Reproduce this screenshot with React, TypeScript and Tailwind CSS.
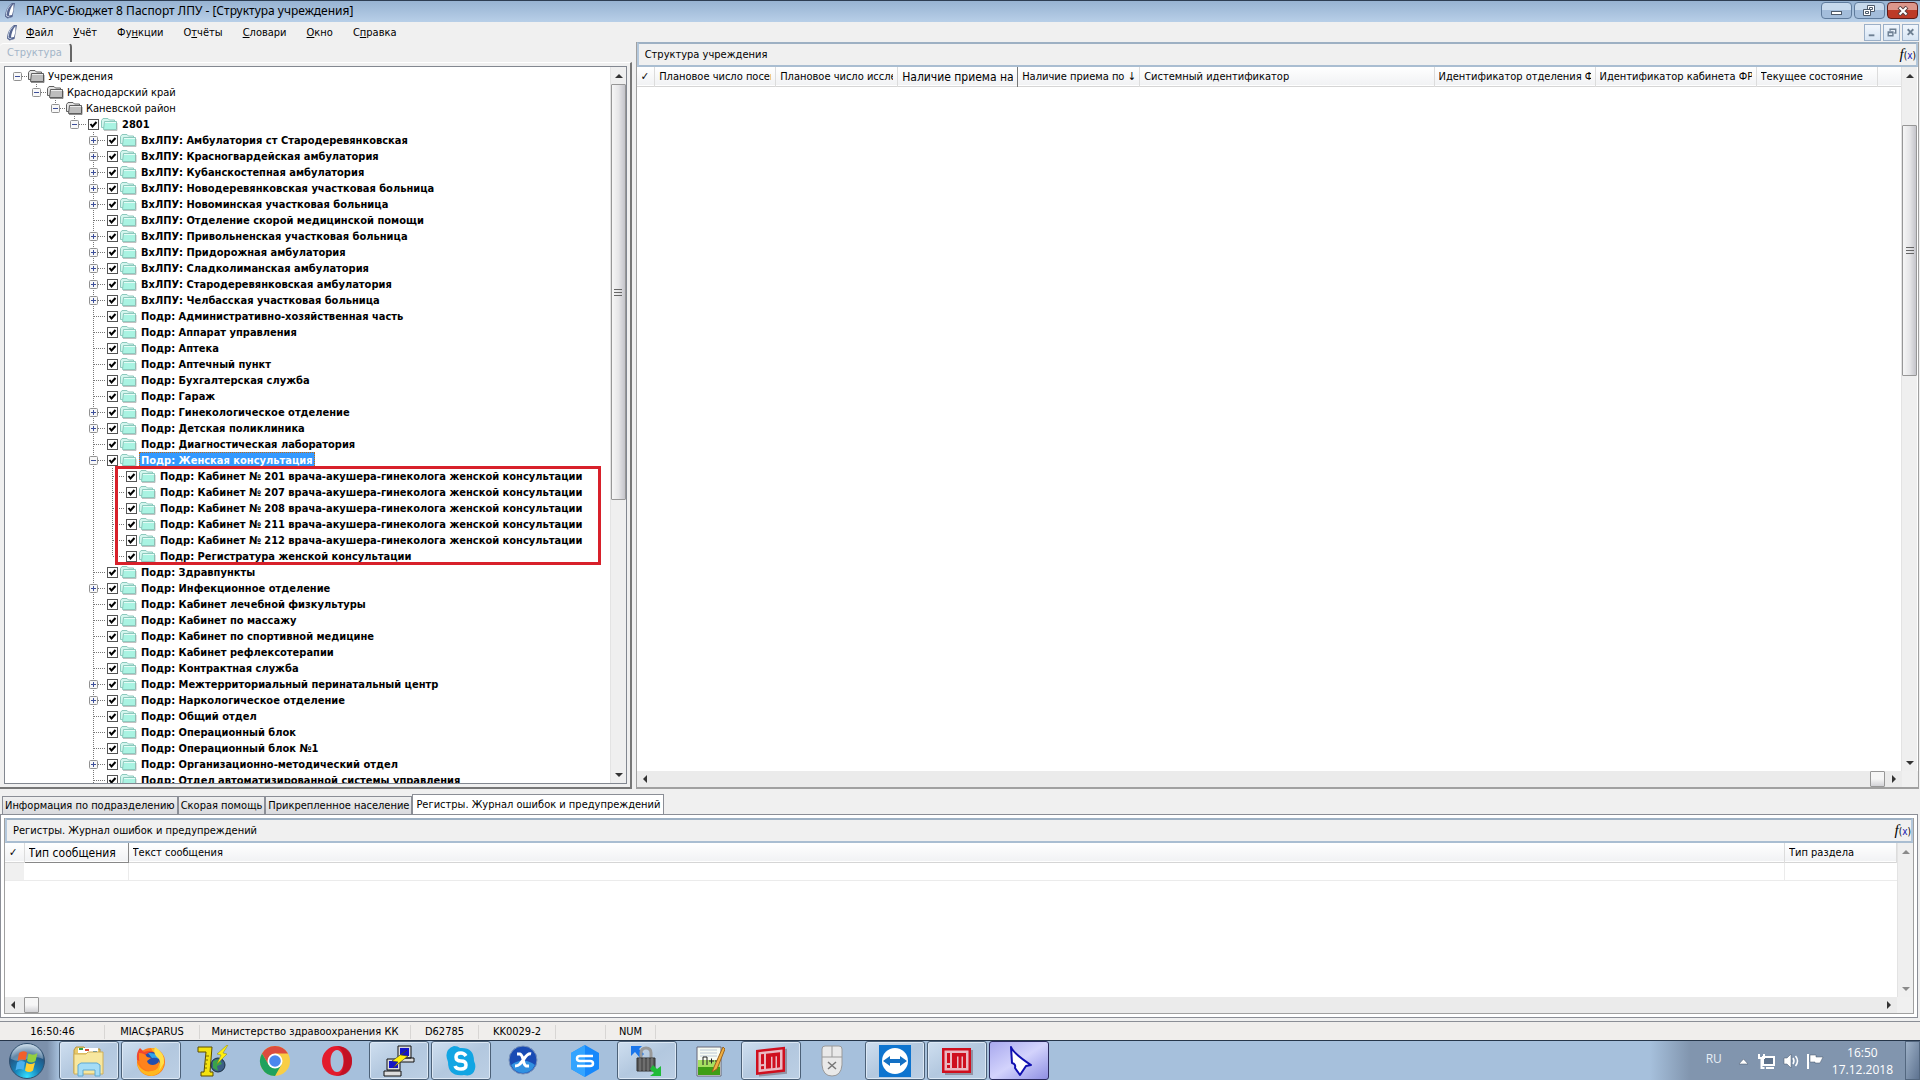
import type { ReactNode } from 'react';

type Item = { text: string; level: number; kind?: 'plus' | 'minus'; gray?: boolean; selected?: boolean };

const roots: Item[] = [
  { text: 'Учреждения', level: 0, kind: 'minus', gray: true },
  { text: 'Краснодарский край', level: 1, kind: 'minus', gray: true },
  { text: 'Каневской район', level: 2, kind: 'minus', gray: true },
  { text: '2801', level: 3, kind: 'minus' },
];

const unitsBefore: Item[] = [
  { text: 'ВхЛПУ: Амбулатория ст Стародеревянковская', level: 4, kind: 'plus' },
  { text: 'ВхЛПУ: Красногвардейская амбулатория', level: 4, kind: 'plus' },
  { text: 'ВхЛПУ: Кубанскостепная амбулатория', level: 4, kind: 'plus' },
  { text: 'ВхЛПУ: Новодеревянковская участковая больница', level: 4, kind: 'plus' },
  { text: 'ВхЛПУ: Новоминская участковая больница', level: 4, kind: 'plus' },
  { text: 'ВхЛПУ: Отделение скорой медицинской помощи', level: 4 },
  { text: 'ВхЛПУ: Привольненская участковая больница', level: 4, kind: 'plus' },
  { text: 'ВхЛПУ: Придорожная амбулатория', level: 4, kind: 'plus' },
  { text: 'ВхЛПУ: Сладколиманская амбулатория', level: 4, kind: 'plus' },
  { text: 'ВхЛПУ: Стародеревянковская амбулатория', level: 4, kind: 'plus' },
  { text: 'ВхЛПУ: Челбасская участковая больница', level: 4, kind: 'plus' },
  { text: 'Подр: Административно-хозяйственная часть', level: 4 },
  { text: 'Подр: Аппарат управления', level: 4 },
  { text: 'Подр: Аптека', level: 4 },
  { text: 'Подр: Аптечный пункт', level: 4 },
  { text: 'Подр: Бухгалтерская служба', level: 4 },
  { text: 'Подр: Гараж', level: 4 },
  { text: 'Подр: Гинекологическое отделение', level: 4, kind: 'plus' },
  { text: 'Подр: Детская поликлиника', level: 4, kind: 'plus' },
  { text: 'Подр: Диагностическая лаборатория', level: 4 },
  { text: 'Подр: Женская консультация', level: 4, kind: 'minus', selected: true },
];

const rooms: Item[] = [
  { text: 'Подр: Кабинет № 201 врача-акушера-гинеколога женской консультации', level: 5 },
  { text: 'Подр: Кабинет № 207 врача-акушера-гинеколога женской консультации', level: 5 },
  { text: 'Подр: Кабинет № 208 врача-акушера-гинеколога женской консультации', level: 5 },
  { text: 'Подр: Кабинет № 211 врача-акушера-гинеколога женской консультации', level: 5 },
  { text: 'Подр: Кабинет № 212 врача-акушера-гинеколога женской консультации', level: 5 },
  { text: 'Подр: Регистратура женской консультации', level: 5 },
];

const unitsAfter: Item[] = [
  { text: 'Подр: Здравпункты', level: 4 },
  { text: 'Подр: Инфекционное отделение', level: 4, kind: 'plus' },
  { text: 'Подр: Кабинет лечебной физкультуры', level: 4 },
  { text: 'Подр: Кабинет по массажу', level: 4 },
  { text: 'Подр: Кабинет по спортивной медицине', level: 4 },
  { text: 'Подр: Кабинет рефлексотерапии', level: 4 },
  { text: 'Подр: Контрактная служба', level: 4 },
  { text: 'Подр: Межтерриториальный перинатальный центр', level: 4, kind: 'plus' },
  { text: 'Подр: Наркологическое отделение', level: 4, kind: 'plus' },
  { text: 'Подр: Общий отдел', level: 4 },
  { text: 'Подр: Операционный блок', level: 4 },
  { text: 'Подр: Операционный блок №1', level: 4 },
  { text: 'Подр: Организационно-методический отдел', level: 4, kind: 'plus' },
  { text: 'Подр: Отдел автоматизированной системы управления', level: 4 },
];

const menu = [
  ['', 'Ф', 'айл'],
  ['', 'У', 'чёт'],
  ['Фу', 'н', 'кции'],
  ['О', 'т', 'чёты'],
  ['', 'С', 'ловари'],
  ['', 'О', 'кно'],
  ['С', 'п', 'равка'],
];

function SailIcon() {
  return (
    <svg width="13" height="17" viewBox="0 0 13 17" className="shrink-0">
      <path d="M8 1C4 4 1 9 1 14.500L3.500 16.500l5-1.500L11 1z" fill="#56658f" />
      <path d="M9.500 2C7 5 5 10 5 13.500L8 13q2-5 1.500-11z" fill="#fff" />
      <path d="M7 2.500C3.500 6 2 10 2.500 14l3 1" stroke="#c3cfe4" fill="none" />
    </svg>
  );
}

function Folder({ gray }: { gray?: boolean }) {
  const line = gray ? '#5f5f5f' : '#8cc9bd';
  const back = gray ? '#e4e4e4' : '#d4f6ee';
  const front = gray ? '#bdbdbd' : '#a9f3e2';
  return (
    <svg width="17" height="14" viewBox="0 0 17 14" className="shrink-0">
      <path d="M.5 10.500V3.500l1.500-2h5l1.500 1.500h5V11z" fill={back} stroke={line} />
      <path d="M2.500 12.500l1-8h12v8z" fill={front} stroke={line} />
      <path d="M4 5.500h11" stroke="#fff" strokeOpacity=".7" />
      <path d="M3 13.500h13V6" stroke={gray ? '#444' : '#9a9a9a'} strokeOpacity=".6" fill="none" />
    </svg>
  );
}

function Guide({ full, own, kind }: { full: boolean; own: boolean; kind?: 'plus' | 'minus' }) {
  return (
    <svg width="19" height="16" viewBox="0 0 19 16" className="shrink-0 overflow-visible">
      {full && <path d="M9.500 0v16" stroke="#777" strokeDasharray="1 1" />}
      {own && !full && <path d="M9.500 0v8" stroke="#777" strokeDasharray="1 1" />}
      {(own || kind) && <path d="M10 8.500h11" stroke="#777" strokeDasharray="1 1" />}
      {kind && (
        <>
          <rect x="5.500" y="4.500" width="8" height="8" rx="1" fill="#f8f8f8" stroke="#919191" />
          <path d={kind === 'plus' ? 'M7 8.500h5M9.500 6v5' : 'M7 8.500h5'} stroke="#3d4f9a" />
        </>
      )}
    </svg>
  );
}

function Row({ item, last }: { item: Item; last?: boolean }) {
  const id = 'node-' + item.text.replace(/[^\p{L}\d]+/gu, '-');
  const cells = Array.from({ length: item.level + 1 }, (_, i) => i);
  return (
    <li className="flex h-4 items-center whitespace-nowrap">
      {cells.map((i) => (
        <Guide
          key={i}
          full={(i === 4 && item.level >= 4) || (i === 5 && !last)}
          own={i === item.level && i > 0}
          kind={i === item.level ? item.kind : undefined}
        />
      ))}
      {item.gray ? (
        <>
          <span className="ml-px flex"><Folder gray /></span>
          <span className="mt-[2px] ml-[3px]">{item.text}</span>
        </>
      ) : (
        <>
          <span className="relative ml-1 flex size-[11px] shrink-0">
            <input id={id} type="checkbox" defaultChecked className="peer size-[11px] appearance-none border border-[#555] bg-white" />
            <svg viewBox="0 0 11 11" className="pointer-events-none absolute inset-0 hidden peer-checked:block">
              <path d="M2.500 5l2 2.500L8.500 3" fill="none" stroke="#000" strokeWidth="2" />
            </svg>
          </span>
          <span className="ml-[2px] flex"><Folder /></span>
          <label
            htmlFor={id}
            className={
              item.selected
                ? 'ml-[2px] border border-dotted border-[#c46a10] bg-[#3399ff] px-px pt-px leading-[13px] font-bold text-white'
                : 'mt-[2px] ml-1 font-bold'
            }
          >
            {item.text}
          </label>
        </>
      )}
    </li>
  );
}

function Arrow({ dir, faint }: { dir: 'up' | 'down' | 'left' | 'right'; faint?: boolean }) {
  const paths = { up: 'M4 11l4-4 4 4z', down: 'M4 6l4 4 4-4z', left: 'M10 4L6 8l4 4z', right: 'M6 4l4 4-4 4z' };
  return (
    <button aria-label={dir} className="size-4 shrink-0">
      <svg viewBox="0 0 16 16" className="size-4">
        <path d={paths[dir]} fill={faint ? '#8a8a8a' : '#333'} />
      </svg>
    </button>
  );
}

type BarProps = { before: number; thumb: number; after: number; faint?: boolean };

function VScroll({ before, thumb, after, faint }: BarProps) {
  return (
    <div className="flex w-4 shrink-0 flex-col border-l border-[#e3e3e3] bg-[#efefef]">
      <Arrow dir="up" faint={faint} />
      <div className="flex flex-1 flex-col">
        <div style={{ flexGrow: before }} />
        {thumb > 0 && (
          <div
            className="flex basis-0 items-center justify-center rounded-[1px] border border-[#979797] bg-linear-to-r from-[#f6f6f6] via-[#e6e6e8] to-[#c4c4ca]"
            style={{ flexGrow: thumb }}
          >
            <span className="h-[7px] w-2 border-y border-[#666]">
              <span className="mt-[2px] block h-px bg-[#666]" />
            </span>
          </div>
        )}
        <div style={{ flexGrow: after }} />
      </div>
      <Arrow dir="down" faint={faint} />
    </div>
  );
}

function HScroll({ before, after }: { before: number; after: number }) {
  return (
    <div className="flex h-4 shrink-0 bg-[#ebebeb]">
      <Arrow dir="left" />
      <div className="flex flex-1">
        <div style={{ flexGrow: before }} />
        <div className="w-[15px] rounded-[1px] border border-[#979797] bg-linear-to-b from-[#f6f6f6] from-50% to-[#d2d2d6]" />
        <div style={{ flexGrow: after }} />
      </div>
      <Arrow dir="right" />
      <div className="w-4 bg-[#f0f0f0]" />
    </div>
  );
}

function PanelTitle({ children }: { children: ReactNode }) {
  return (
    <div className="flex h-[25px] shrink-0 items-center justify-between border-2 border-[#b4c8dc] border-t-[#9db0c3] border-b-[#a9bdd1] bg-[#f0f0f0] pt-px pl-[6px]">
      <h2>{children}</h2>
      <button aria-label="Формула" className="leading-4">
        <i className="font-['Liberation_Serif',serif] text-[15px]">f</i>
        <span className="text-[10px]">(<span className="text-[#1b1bb0]">x</span>)</span>
      </button>
    </div>
  );
}

function Head({ children, className = '' }: { children?: ReactNode; className?: string }) {
  return (
    <th className={`border-r border-[#dcdcdc] pt-[2px] pr-1 pl-1 text-left font-normal ${className}`}>
      <div className="overflow-hidden whitespace-nowrap">{children}</div>
    </th>
  );
}

function TaskButton({ label, open, active, children }: { label: string; open?: boolean; active?: boolean; children: ReactNode }) {
  const look = active
    ? 'border-[#2a2a5e] bg-linear-to-br from-[#a9a9ee] via-[#d3d3fc] to-[#8f8fe2]'
    : open
      ? 'border-[#4c6178] bg-linear-to-br from-[#cfdff0] via-[#b3c8df] to-[#bccfe4] shadow-[inset_0_0_0_1px_#dce8f5]'
      : 'border-transparent';
  return (
    <button aria-label={label} className={`flex h-[39px] w-[60px] items-center justify-center rounded-[3px] border ${look}`}>
      <svg width="32" height="32" viewBox="0 0 32 32">{children}</svg>
    </button>
  );
}

function Monogram() {
  return (
    <>
      <path d="M4 5h28v25H4z" fill="#6b5a66" opacity=".5" />
      <path d="M1 3h29v25H1z" fill="#cf0f1e" />
      <path d="M3.500 5.500h24v20h-24z" fill="#e9b9c2" />
      <path d="M6 8h3v10H6zM6 20h3v3H6z" fill="#cf0f1e" />
      <path d="M11 8h14v15h-3V11.500h-1.500V23h-3V11.500H16V23h-5z" fill="#cf0f1e" />
    </>
  );
}

const cell = 'border-r border-[#d8d6d4]';

export default function App() {
  return (
    <div className="flex h-screen flex-col overflow-hidden bg-[#f0f0f0] font-['DejaVu_Sans_Condensed','DejaVu_Sans',sans-serif] text-[11px] leading-[14px] text-black">
      {/* Title bar */}
      <header className="flex h-[22px] shrink-0 items-start border-t border-[#2d3d52] bg-linear-to-b from-[#97b3d2] to-[#b8cfe8] pl-1">
        <span className="mt-px"><SailIcon /></span>
        <h1 className="mt-[2px] ml-[9px] font-['Noto_Sans',sans-serif] text-[12px] leading-4">ПАРУС-Бюджет 8 Паспорт ЛПУ - [Структура учреждения]</h1>
        <div className="mt-px mr-[2px] ml-auto flex gap-[2px]">
          <button aria-label="Свернуть" className="flex h-[17px] w-[31px] items-center justify-center rounded-sm border border-[#5f7b9c] bg-linear-to-b from-[#c7d9ec] from-50% to-[#a3bddb] to-50%">
            <span className="mt-1 h-1 w-[11px] border border-[#4d5a6b] bg-white" />
          </button>
          <button aria-label="Развернуть" className="flex h-[17px] w-[31px] items-center justify-center rounded-sm border border-[#5f7b9c] bg-linear-to-b from-[#c7d9ec] from-50% to-[#a3bddb] to-50%">
            <svg width="13" height="12" viewBox="0 0 13 12" fill="#fff" stroke="#4d5a6b">
              <path d="M4.500.500h7v6h-7z" />
              <path d="M6.500 2.500h3v2h-3z" />
              <path d="M.5 4.500h7v6h-7z" />
              <path d="M2.500 6.500h3v2h-3z" />
            </svg>
          </button>
          <button aria-label="Закрыть" className="flex h-[17px] w-[31px] items-center justify-center rounded-sm border border-[#5c1a16] bg-linear-to-b from-[#dc968b] from-50% to-[#bd3a27] to-50%">
            <svg width="12" height="10" viewBox="0 0 12 10">
              <path d="M2 1l8 8M10 1L2 9" stroke="#5b4040" strokeWidth="4" />
              <path d="M2.500 1.500l7 7M9.500 1.500l-7 7" stroke="#fff" strokeWidth="2" />
            </svg>
          </button>
        </div>
      </header>

      {/* Menu */}
      <nav className="flex h-5 shrink-0 items-center bg-[#f0f0f0] pr-px pl-[6px]">
        <SailIcon />
        <div className="mt-[2px] ml-[7px] flex gap-5">
          {menu.map(([a, u, b]) => (
            <button key={a + u + b}>{a}<span className="underline">{u}</span>{b}</button>
          ))}
        </div>
        <div className="ml-auto flex gap-[2px]">
          {['M4 11h6', 'M6.500 6V4.500h6v4H11M4.500 7.500h5v4h-5zM4.500 8h5', 'M5 4.500l6 6M11 4.500l-6 6'].map((d, i) => (
            <button key={d} aria-label={['Свернуть окно', 'Восстановить окно', 'Закрыть окно'][i]} className="h-[17px] w-[17px] border border-[#9cb0c8] bg-linear-to-b from-[#f1f6fc] to-[#d7e5f4]">
              <svg width="15" height="15" viewBox="0 0 16 16">
                <path d={d} fill="none" stroke="#6d7f92" strokeWidth={i === 1 ? 1.5 : 2} />
              </svg>
            </button>
          ))}
        </div>
      </nav>

      <main className="flex min-h-0 flex-1">
        {/* Structure tree */}
        <section className="flex w-[32.9%] shrink-0 flex-col">
          <div className="flex h-5 items-center">
            <button role="tab" className="mt-px h-[19px] rounded-t-sm border-t border-r-2 border-t-white border-r-[#666] pr-2 pl-[7px] text-[#a3b5c8]">Структура</button>
          </div>
          <div className="flex min-h-0 flex-1 border-t border-r-2 border-b-2 border-white border-r-[#777] border-b-[#777] p-[3px] pl-1">
            <div className="flex min-h-0 min-w-0 flex-1 border border-[#828790] bg-white">
              <ul className="min-w-0 flex-1 overflow-hidden pt-px pl-[3px]">
                {roots.map((r) => <Row key={r.text} item={r} />)}
                {unitsBefore.map((r) => <Row key={r.text} item={r} />)}
                <li className="relative">
                  <ul>
                    {rooms.map((r, i) => <Row key={r.text} item={r} last={i === rooms.length - 1} />)}
                  </ul>
                  <span className="pointer-events-none absolute -top-[2px] -bottom-px left-[107px] w-[486px] border-[3px] border-[#d8202a]" />
                </li>
                {unitsAfter.map((r) => <Row key={r.text} item={r} />)}
              </ul>
              <VScroll before={1} thumb={415} after={267} />
            </div>
          </div>
        </section>

        {/* Institution grid */}
        <section className="mr-px ml-1 flex min-w-0 flex-1 flex-col border-r border-b-2 border-l border-[#a0a0a0] bg-white">
          <PanelTitle>Структура учреждения</PanelTitle>
          <div className="flex min-h-0 flex-1 pr-px">
            <div className="min-w-0 flex-1">
              <table className="w-full table-fixed border-collapse">
                <colgroup>
                  <col className="w-[18px]" />
                  <col className="w-[121px]" />
                  <col className="w-[122px]" />
                  <col className="w-[120px]" />
                  <col className="w-[122px]" />
                  <col />
                  <col className="w-[161px]" />
                  <col className="w-[161px]" />
                  <col className="w-[121px]" />
                  <col className="w-6" />
                </colgroup>
                <thead>
                  <tr className="h-[19px] border-b border-[#d5d5d5] bg-linear-to-b from-white to-[#f1f2f4]">
                    <Head>✓</Head>
                    <Head>Плановое число посещ</Head>
                    <Head>Плановое число исслед</Head>
                    <Head className="border-r-[#777] text-[12px]">Наличие приема на</Head>
                    <Head>Наличие приема по ↓</Head>
                    <Head>Системный идентификатор</Head>
                    <Head>Идентификатор отделения ФР</Head>
                    <Head>Идентификатор кабинета ФРМ</Head>
                    <Head>Текущее состояние</Head>
                    <th />
                  </tr>
                </thead>
              </table>
            </div>
            <VScroll before={42} thumb={249} after={378} />
          </div>
          <HScroll before={1228} after={1} />
        </section>
      </main>

      {/* Error log */}
      <section className="shrink-0 pt-[5px] pb-[3px]">
        <div role="tablist" className="flex h-5 items-end pl-[2px]">
          {['Информация по подразделению', 'Скорая помощь', 'Прикрепленное население'].map((t) => (
            <button key={t} role="tab" className="h-[18px] border border-b-0 border-[#8b8e96] bg-linear-to-b from-[#f0f0f0] to-[#d9dade] px-[2px] pt-px whitespace-nowrap">{t}</button>
          ))}
          <button role="tab" aria-selected="true" className="h-5 border border-b-0 border-[#8b8e96] bg-white px-[3px] whitespace-nowrap">Регистры. Журнал ошибок и предупреждений</button>
        </div>
        <div className="mr-[2px] border border-[#8b8e96] bg-white p-[3px]">
          <div className="border border-t-0 border-[#a0a0a0]">
            <PanelTitle>Регистры. Журнал ошибок и предупреждений</PanelTitle>
            <div className="flex h-[154px]">
              <div className="min-w-0 flex-1">
                <table className="w-full table-fixed border-collapse">
                  <colgroup>
                    <col className="w-[19px]" />
                    <col className="w-[104px]" />
                    <col />
                    <col className="w-[112px]" />
                  </colgroup>
                  <thead>
                    <tr className="h-[19px] border-b border-[#d5d5d5] bg-linear-to-b from-white to-[#f1f2f4]">
                      <Head>✓</Head>
                      <Head className="border-b border-r-[#888] border-b-[#888] text-[12px]">Тип сообщения</Head>
                      <Head>Текст сообщения</Head>
                      <Head>Тип раздела</Head>
                    </tr>
                  </thead>
                  <tbody>
                    <tr className="h-[18px] border-b border-[#ebebeb]">
                      <td className="bg-[#f0f0f0]" />
                      <td className="border-r border-[#ebebeb]" />
                      <td className="border-r border-[#ebebeb]" />
                      <td />
                    </tr>
                  </tbody>
                </table>
              </div>
              <VScroll before={1} thumb={0} after={0} faint />
            </div>
            <HScroll before={3} after={1850} />
          </div>
        </div>
      </section>

      {/* Status bar */}
      <footer className="flex h-[19px] shrink-0 items-center border-t border-[#8b8e96] bg-[#f0eeec] pt-px pl-px text-center">
        <span className={`${cell} w-[104px]`}>16:50:46</span>
        <span className={`${cell} w-[95px]`}>MIAC$PARUS</span>
        <span className={`${cell} w-[211px]`}>Министерство здравоохранения КК</span>
        <span className={`${cell} w-[68px]`}>D62785</span>
        <span className={`${cell} w-[77px]`}>KK0029-2</span>
        <span className={`${cell} h-[14px] w-[50px]`} />
        <span className={`${cell} w-[50px]`}>NUM</span>
      </footer>

      {/* Taskbar */}
      <div className="flex h-10 shrink-0 border-t border-[#26364a] bg-[#a6c0dc]">
        <button aria-label="Пуск" className="flex w-[59px] items-center bg-linear-to-r from-[#7c90ab] from-80% to-[#a6c0dc] pl-2">
          <svg width="38" height="38" viewBox="0 0 38 38">
            <defs>
              <radialGradient id="orb" cx=".5" cy=".95" r=".9">
                <stop offset="0" stopColor="#35e0ff" />
                <stop offset=".4" stopColor="#1682b8" />
                <stop offset=".75" stopColor="#235683" />
                <stop offset="1" stopColor="#a9c3d8" />
              </radialGradient>
            </defs>
            <circle cx="19" cy="19" r="17.500" fill="url(#orb)" stroke="#31506f" />
            <path d="M3 17a16 15 0 0 1 32 0q-8-4-16 0t-16 0z" fill="#fff" opacity=".3" />
            <path d="M11 11q4-3 8-.500l-1.500 8q-4-2-8 .500z" fill="#f2602a" />
            <path d="M20.500 11.500q5 2.500 9-.500l-2 8q-4 3-8.500 0z" fill="#93cf40" />
            <path d="M9 20.500q4-2.500 8-.500l-1.500 8q-4-2-8 .500z" fill="#4bb0ee" />
            <path d="M18.500 20.500q4 3 8.500 0l-2 8q-4 3-8 0z" fill="#ffd033" />
          </svg>
        </button>
        <div className="flex gap-[2px]">
          <TaskButton label="Проводник" open>
            <path d="M1 5l2-3h8l2 2h14v24H1z" fill="#e9ca6b" stroke="#b8963d" />
            <path d="M5 3h20v5H5z" fill="#fff" />
            <path d="M6 3h4v2H6z" fill="#37a046" /><path d="M12 4h4v2h-4z" fill="#d44932" /><path d="M20 6h4v2h-4z" fill="#3987cb" />
            <path d="M1 9h12l2-2h15v22H1z" fill="#f7e79f" stroke="#cfae56" />
            <path d="M5 31V20l3-2h16l3 2v11h-5v-6H10v6z" fill="#a4dcf6" stroke="#5ea8d1" />
          </TaskButton>
          <TaskButton label="Firefox" open>
            <circle cx="16" cy="17" r="14" fill="#ff7a18" />
            <path d="M16 3q11 1 13 11 1 14-12 17Q4 30 2 18q7 12 17 7 7-5 4-12-3-2-7-10z" fill="#ffb820" />
            <path d="M2 15Q1 7 5 3l4 4q8-3 14 3l-4 9-10-1z" fill="#f04830" />
            <circle cx="17" cy="15" r="8" fill="#244fae" />
            <path d="M13 8q9-1 11 6-4-2-7-1z" fill="#2fa4e8" />
            <path d="M4 8q6 0 8 4l4 1-4 3q1 4 6 4 5-1 6-4 1 9-7 10Q5 26 4 14z" fill="#ff831c" />
            <path d="M20 2q10 6 9 16l-5 8q4-10-3-15-3-4-1-9z" fill="#ffe04a" />
          </TaskButton>
          <TaskButton label="7 клиент">
            <path d="M1 2h14l-2 25h3v4H4v-4h3L9 7H1z" fill="#f3e211" stroke="#5a4c00" />
            <circle cx="21" cy="20" r="7" fill="#3c5f87" stroke="#1b2e40" />
            <path d="M16 16l6-2 3 5-5 2 1 5-5-3z" fill="#3aa24b" />
            <path d="M30 0l-10 9 4 1-4 9 10-10-4-1 5-8z" fill="#ffee10" stroke="#87801c" strokeWidth=".5" />
            <path d="M9 11h3M9 15h2M8 19h2M8 23h2" stroke="#806c00" />
          </TaskButton>
          <TaskButton label="Chrome">
            <circle cx="16" cy="16" r="15" fill="#f9ce45" />
            <path d="M16 8.500h13A15 15 0 0 0 3 8.500l6.500 11z" fill="#dc4b3e" />
            <path d="M3 8.500A15 15 0 0 0 16 31l6.500-11.500h-13z" fill="#1fa15d" />
            <circle cx="16" cy="16" r="7.500" fill="#fff" /><circle cx="16" cy="16" r="5.800" fill="#4a86ee" />
          </TaskButton>
          <TaskButton label="Opera">
            <path fillRule="evenodd" d="M16 1a15 15 0 1 0 0 30 15 15 0 0 0 0-30zm0 4c4 0 6.500 5 6.500 11S20 27 16 27 9.500 22 9.500 16 12 5 16 5z" fill="#e31b2c" />
            <path d="M16 1q15 1 15 15T16 31q7-3 7-15T16 1z" fill="#b50c20" opacity=".7" />
          </TaskButton>
          <TaskButton label="PuTTY" open>
            <path d="M15 1h13v12H15zM14 13h17v4H14zM4 14h13v11H4zM1 26h17v5H1z" fill="#ddd" stroke="#111" />
            <path d="M17 3h9v8h-9zM6 16h9v7H6z" fill="#1515c8" />
            <path d="M24 5L9 16l6 1-5 6 15-12-7-1z" fill="#ffee10" stroke="#333" strokeWidth=".6" />
          </TaskButton>
          <TaskButton label="Skype" open>
            <path d="M9 1q4 0 6 2 14-1 14 13 2 4 1 8-2 8-11 6Q3 32 3 17-2 5 9 1z" fill="#12a5e3" />
            <path d="M21 11q-2-3-5-3-5 0-5 4t5 4 5 4-5 4-6-3" fill="none" stroke="#fff" strokeWidth="3.500" />
          </TaskButton>
          <TaskButton label="X">
            <circle cx="16" cy="15" r="14" fill="#194bb4" stroke="#7892ba" />
            <path d="M4 20q12-9 24 0-4 8-12 8T4 20z" fill="#36a2ec" opacity=".8" />
            <path d="M10 9h3q2 1 3 5 1 6 3 7h3M24 9q-3-1-7 5l-4 5q-2 2-5 2" fill="none" stroke="#fff" strokeWidth="3" />
          </TaskButton>
          <TaskButton label="S">
            <path d="M16 0l14 8v16l-14 8-14-8V8z" fill="#1688fb" />
            <path d="M16 0v32L2 24V8z" fill="#33a4ff" />
            <path d="M24 11H11q-3 0-3 2.500T11 16h10q3 0 3 2.500T21 21H8" fill="none" stroke="#fff" strokeWidth="2.500" />
          </TaskButton>
          <TaskButton label="Защищённый канал" open>
            <path d="M0 1h11l-3 3 5 5-4 4-5-6-4 4z" fill="#1a76ec" />
            <path d="M10 14V8q0-5 5-5t5 5v6" fill="none" stroke="#999" strokeWidth="3" />
            <path d="M6 13h18v13H6z" fill="#555" stroke="#333" />
            <path d="M9 13v13M13 13v13M17 13v13M21 13v13" stroke="#888" />
            <path d="M22 20l4 4 4-3v10H19l4-3-4-4z" fill="#20bb38" />
          </TaskButton>
          <TaskButton label="Notepad++">
            <path d="M4 2h24v29H4z" fill="#f7fbf3" stroke="#667" />
            <path d="M5 15h22v8H5z" fill="#a6e060" />
            <path d="M5 22h22v8H5z" fill="#3f9e15" />
            <path d="M7 5h17M7 8h17M7 11h17" stroke="#bcc8d6" />
            <path d="M10 20v-8h4v8M16 16h5M18.500 13.500v5M22 16h4" stroke="#222" fill="none" />
            <path d="M30 2l-9 20-2 5 5-3 8-20z" fill="#f0b041" stroke="#996320" />
          </TaskButton>
          <TaskButton label="Miranda" open><g transform="skewY(-6) translate(0 2)"><Monogram /></g></TaskButton>
          <TaskButton label="Мышь">
            <path d="M8 1h14q3 0 3 3v16q-1 11-10 11T5 20V4q0-3 3-3z" fill="#e9e9e9" stroke="#9a9a9a" />
            <path d="M15 1v11M5 12h20" stroke="#999" />
            <path d="M11 17l8 7M19 17l-8 7" stroke="#777" strokeWidth="1.500" />
          </TaskButton>
          <TaskButton label="TeamViewer" open>
            <path d="M0 0h32v32H0z" fill="#0e74cf" />
            <circle cx="16" cy="16" r="13" fill="#fff" />
            <path d="M4 16l7-5v3h10v-3l7 5-7 5v-3H11v3z" fill="#1370c4" />
          </TaskButton>
          <TaskButton label="Miranda 2" open><Monogram /></TaskButton>
          <TaskButton label="ПАРУС" active>
            <path d="M8 2q2 6 20 18l-5 1-6 9-5-7q1-4-3-5z" fill="#fff" stroke="#1010b0" strokeWidth="2" strokeLinejoin="round" />
          </TaskButton>
        </div>
        <div className="ml-auto flex items-center bg-linear-to-r from-[#a6c0dc] to-[#8195ae] to-15% pl-14 font-['Open_Sans',sans-serif] text-[12px] text-white">
          <span className="mb-1 text-[#e6edf5]">RU</span>
          <svg width="90" height="20" viewBox="0 0 90 20" className="ml-4">
            <path d="M1 13l4.500-5 4.500 5z" fill="#fff" stroke="#47566a" strokeWidth=".5" />
            <g transform="translate(-3)">
              <path d="M28 6h11v8H28z" fill="#60748d" stroke="#fff" strokeWidth="2" />
              <path d="M24 3v4h5V3M26.500 7v10h3M31 17h8" stroke="#fff" strokeWidth="2" fill="none" />
              <path d="M49 7h3l4-4v14l-4-4h-3z" fill="#fff" stroke="#47566a" strokeWidth=".5" />
              <path d="M58 7q2 3 0 6M60.500 5q4 5 0 10" stroke="#fff" fill="none" strokeWidth="1.500" />
              <path d="M73 3v15" stroke="#fff" strokeWidth="2" />
              <path d="M75 4h6v2h7l-3 6h-5v-1h-5z" fill="#fff" stroke="#47566a" strokeWidth=".5" />
            </g>
          </svg>
          <div className="ml-1 text-center leading-[17px]">
            <div>16:50</div>
            <div>17.12.2018</div>
          </div>
          <button aria-label="Показать рабочий стол" className="ml-3 h-full w-[15px] border border-[#53677f] bg-linear-to-br from-[#9fb2c8] to-[#5e7390]" />
        </div>
      </div>
    </div>
  );
}
